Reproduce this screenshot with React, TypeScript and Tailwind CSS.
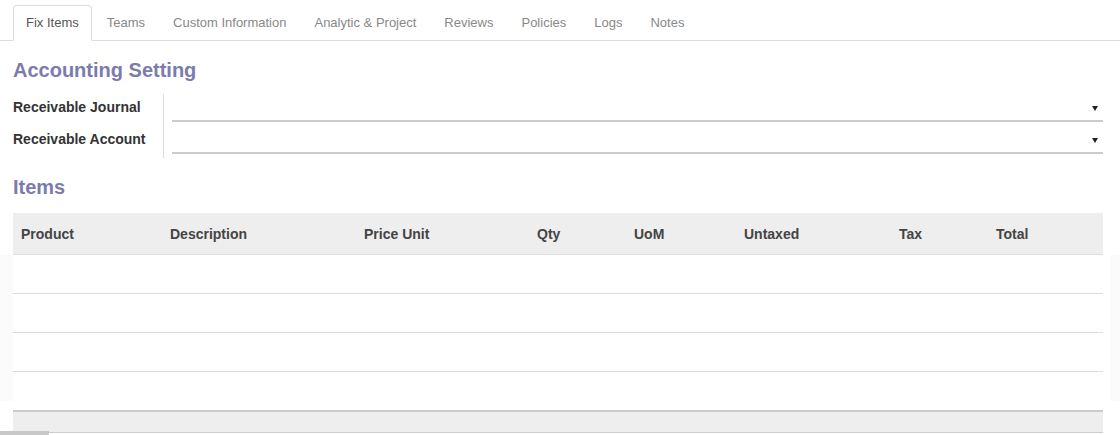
const tabs = [
  'Fix Items',
  'Teams',
  'Custom Information',
  'Analytic & Project',
  'Reviews',
  'Policies',
  'Logs',
  'Notes',
];

const columns = ['Product', 'Description', 'Price Unit', 'Qty', 'UoM', 'Untaxed', 'Tax', 'Total'];

function SelectField() {
  return (
    <div className="relative h-[28px] border-b-2 border-[#cccccc]">
      <span className="absolute right-[5px] top-[12px] h-0 w-0 border-l-[3px] border-r-[3px] border-t-[5px] border-l-transparent border-r-transparent border-t-[#222]" />
    </div>
  );
}

export default function App() {
  return (
    <div
      className="relative h-[435px] w-[1120px] overflow-hidden bg-white text-[13px] text-[#4c4c4c]"
      style={{ fontFamily: '"Liberation Sans", Arial, sans-serif' }}
    >
      {/* Tabs */}
      <div className="flex border-b border-[#dddddd] pl-[13px] pt-[5px]">
        {tabs.map((t, i) => (
          <div
            key={t}
            className={`-mb-px mr-[2px] rounded-t-[4px] border px-[12px] py-[8px] leading-[18px] ${
              i === 0
                ? 'border-[#dddddd] border-b-white bg-white text-[#555555]'
                : 'border-transparent text-[#888888]'
            }`}
          >
            {t}
          </div>
        ))}
      </div>

      <div className="pl-[13px] pr-[17px]">
        {/* Accounting Setting */}
        <h2 className="mt-[17px] text-[20px] font-bold leading-[24px] text-[#7c7bad]">
          Accounting Setting
        </h2>
        <div className="mt-[12px] flex">
          <div className="w-[150px] text-[14px] font-bold text-[#333333]">
            <div className="h-[32px] pt-[4px] leading-[18px]">Receivable Journal</div>
            <div className="h-[32px] pt-[4px] leading-[18px]">Receivable Account</div>
          </div>
          <div className="flex flex-1 flex-col gap-[4px] border-l border-[#dddddd] pb-[4px] pl-[8px]">
            <SelectField />
            <SelectField />
          </div>
        </div>

        {/* Items */}
        <h2 className="mt-[17px] text-[20px] font-bold leading-[24px] text-[#7c7bad]">Items</h2>
      </div>

      <div className="mt-[14px] flex">
        <div className="w-[13px]">
          <div className="mt-[42px] h-[146px] bg-[#fbfbfb]" />
        </div>
        <div className="flex-1">
          <div className="grid h-[42px] grid-cols-[149px_194px_173px_97px_110px_155px_97px_1fr] items-center border-b border-[#dddddd] bg-[#eeeeee] text-[14px] font-bold text-[#444444]">
            {columns.map((c) => (
              <div key={c} className="px-[8px] pt-px">
                {c}
              </div>
            ))}
          </div>
          {[0, 1, 2].map((r) => (
            <div key={r} className="h-[39px] border-b border-[#dddddd]" />
          ))}
          <div className="h-[38px]" />
          <div className="h-[23px] border-b border-t-2 border-[#cccccc] bg-[#eeeeee]" />
        </div>
        <div className="flex w-[17px] justify-end">
          <div className="mt-[42px] h-[146px] w-[10px] bg-[#fbfbfb]" />
        </div>
      </div>

      {/* horizontal scrollbar thumb */}
      <div className="absolute bottom-0 left-0 h-[4px] w-[49px] bg-[#c8c8c8]" />
    </div>
  );
}
